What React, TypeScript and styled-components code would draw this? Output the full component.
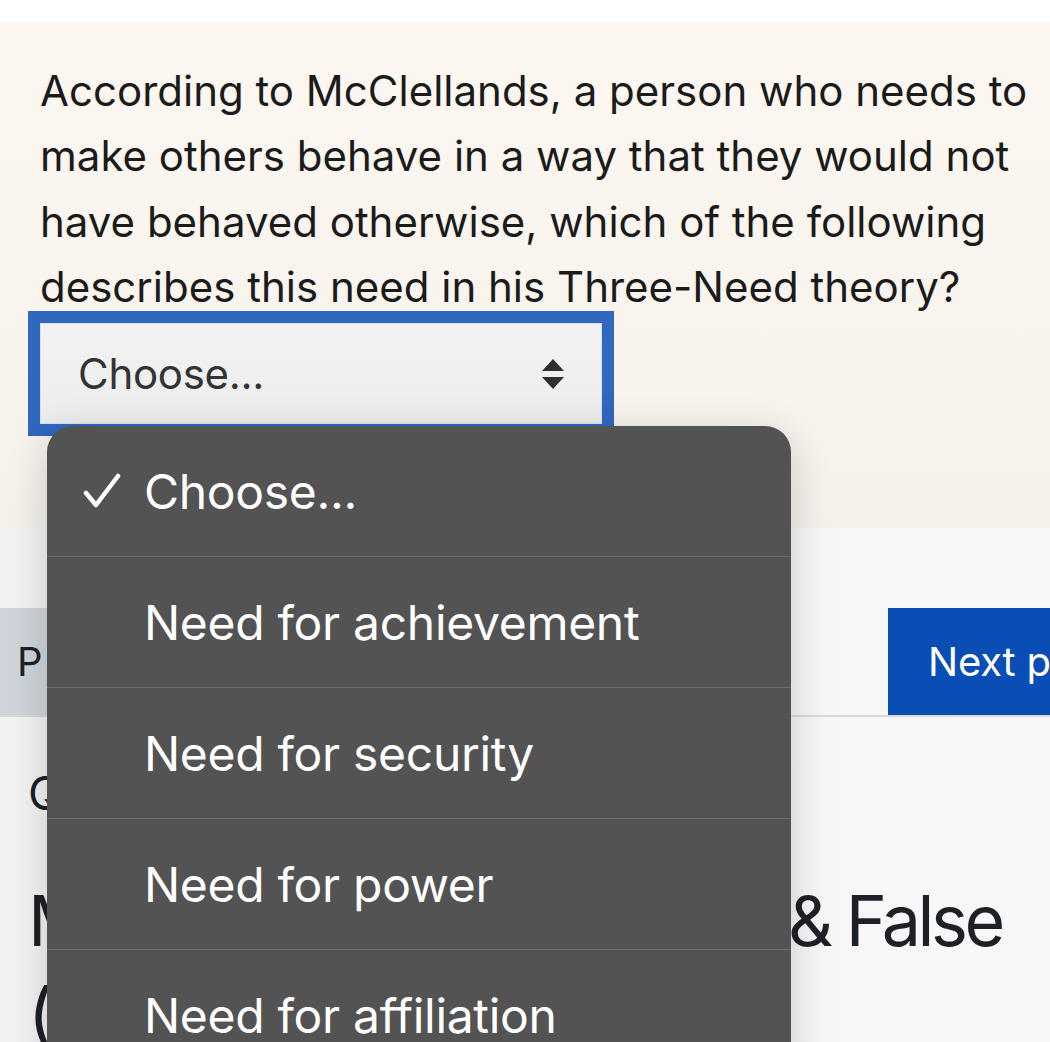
import React from "react";
import styled, { createGlobalStyle } from "styled-components";

const GlobalStyle = createGlobalStyle`
  html, body {
    margin: 0;
    padding: 0;
    background: #f4f4f4;
  }
  body {
    font-family: Inter, "Liberation Sans", Arial, sans-serif;
    -webkit-font-smoothing: antialiased;
  }
`;

const Page = styled.div`
  width: 1050px;
  height: 1042px;
  overflow: hidden;
  background: linear-gradient(90deg, #f2f2f2 0%, #f5f5f5 60%, #f8f8f8 100%);
  display: flex;
  flex-direction: column;
`;

const TopStrip = styled.div`
  height: 22px;
  background: #ffffff;
  flex-shrink: 0;
`;

const QuestionCard = styled.section`
  height: 506px;
  box-sizing: border-box;
  padding: 36px 20px 0 40px;
  background: linear-gradient(180deg, #fcf8f1 0%, #f8f4ed 70%, #f4f1eb 100%);
  position: relative;
  z-index: 2;
  flex-shrink: 0;
`;

const QuestionText = styled.p`
  margin: 0;
  font-size: 42px;
  line-height: 65.3px;
  color: #1b1b1b;
  letter-spacing: 0;
  white-space: nowrap;
`;

const SelectWrap = styled.div`
  position: relative;
  margin-top: 4px;
  width: 562px;
`;

const SelectBox = styled.div`
  height: 101px;
  box-sizing: border-box;
  display: flex;
  align-items: center;
  justify-content: space-between;
  padding: 0 36px 0 37px;
  background: linear-gradient(180deg, #f3f3f3 0%, #ececec 100%);
  border: 1px solid #d6e2f2;
  box-shadow: 0 0 0 12px #2f68bf;
  font-size: 42px;
  color: #333333;
  letter-spacing: -0.3px;
`;

const Menu = styled.ul`
  position: absolute;
  left: 7px;
  top: 103px;
  width: 744px;
  margin: 0;
  padding: 0;
  list-style: none;
  background: #535353;
  border-radius: 26px 26px 0 0;
  box-shadow: 0 10px 40px rgba(0, 0, 0, 0.18);
  overflow: hidden;
`;

const MenuItem = styled.li<{ first?: boolean }>`
  height: 130px;
  display: flex;
  align-items: center;
  padding-left: 36px;
  border-top: ${({ first }) => (first ? "none" : "1.5px solid #6b6b6b")};
  font-size: 48px;
  color: #ffffff;
  letter-spacing: -0.3px;
`;

const CheckSlot = styled.span`
  width: 61px;
  display: flex;
  align-items: center;
`;

const Nav = styled.nav`
  margin-top: 80px;
  height: 109px;
  box-sizing: border-box;
  display: flex;
  justify-content: space-between;
  align-items: flex-start;
  border-bottom: 2px solid #dadada;
  flex-shrink: 0;
`;

const NavButton = styled.button<{ primary?: boolean }>`
  height: 107px;
  border: none;
  margin: 0;
  font-family: inherit;
  font-size: 40px;
  white-space: nowrap;
  background: ${({ primary }) => (primary ? "#0a4db5" : "#ced4da")};
  color: ${({ primary }) => (primary ? "#ffffff" : "#1d2125")};
  padding: ${({ primary }) => (primary ? "0 30px 0 40px" : "0 30px 0 17px")};
  letter-spacing: ${({ primary }) => (primary ? "-0.2px" : "5px")};
  text-align: left;
`;

const NextButton = styled(NavButton)`
  width: 162px;
  flex-shrink: 0;
`;

const QuestionLabel = styled.div`
  margin: 49px 0 0 28px;
  font-size: 46px;
  line-height: 55px;
  color: #1d2125;
`;

const Heading = styled.h2`
  margin: 53px 0 0 28px;
  font-weight: 400;
  font-size: 70px;
  line-height: 93px;
  letter-spacing: -3.5px;
  color: #1d2125;
  white-space: nowrap;
`;

const SortArrows = () => (
  <svg width="24" height="30" viewBox="0 0 24 30" aria-hidden="true">
    <path d="M12 0 L23 12 L1 12 Z" fill="#2f2f2f" />
    <path d="M1 18 L23 18 L12 30 Z" fill="#2f2f2f" />
  </svg>
);

const Check = () => (
  <svg width="38" height="36" viewBox="0 0 38 36" aria-hidden="true">
    <path
      d="M3 20 L13 32 L35 3"
      fill="none"
      stroke="#ffffff"
      strokeWidth="4.5"
      strokeLinecap="round"
      strokeLinejoin="round"
    />
  </svg>
);

const options = [
  "Choose...",
  "Need for achievement",
  "Need for security",
  "Need for power",
  "Need for affiliation",
];

export default function App() {
  return (
    <>
      <GlobalStyle />
      <Page>
        <TopStrip />
        <QuestionCard>
          <QuestionText>
            According to McClellands, a person who needs to
            <br />
            make others behave in a way that they would not
            <br />
            have behaved otherwise, which of the following
            <br />
            describes this need in his Three-Need theory?
          </QuestionText>
          <SelectWrap>
            <SelectBox role="combobox" aria-expanded="true">
              <span>Choose...</span>
              <SortArrows />
            </SelectBox>
            <Menu role="listbox">
              {options.map((opt, i) => (
                <MenuItem key={opt} first={i === 0} role="option" aria-selected={i === 0}>
                  <CheckSlot>{i === 0 && <Check />}</CheckSlot>
                  {opt}
                </MenuItem>
              ))}
            </Menu>
          </SelectWrap>
        </QuestionCard>
        <Nav>
          <NavButton>Previous page</NavButton>
          <NextButton primary>Next page</NextButton>
        </Nav>
        <QuestionLabel>Question 24</QuestionLabel>
        <Heading>
          Multiple Choice and True &amp; False
          <br />
          (Chapter 5)
        </Heading>
      </Page>
    </>
  );
}
